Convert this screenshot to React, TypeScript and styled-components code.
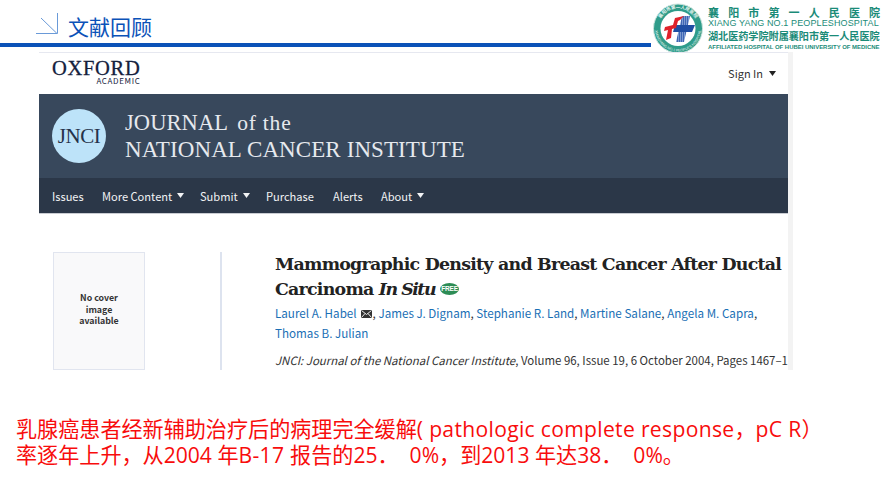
import React from "react";
import styled, { createGlobalStyle } from "styled-components";

const Global = createGlobalStyle`
  html, body { margin: 0; padding: 0; background: #fff; }
  #root { width: 888px; height: 500px; overflow: hidden; }
`;
const CJK = `"Noto Sans CJK SC", sans-serif`;
const YAHEI = `"Open Sans", "Noto Sans CJK SC", sans-serif`;

const Slide = styled.div`
  width: 888px; height: 500px; background: #fff; display: flex; flex-direction: column; overflow: hidden;
`;
const Header = styled.header`
  height: 52px; display: flex; align-items: flex-start; flex: none;
`;
const TitleBar = styled.div`
  width: 651px; height: 47px; box-sizing: border-box; border-bottom: 4px solid #0b52b8;
  display: flex; align-items: flex-start; padding: 13px 0 0 36px; gap: 10px;
`;
const SlideTitle = styled.h1`
  margin: 0; font: 400 21px/26px ${CJK}; color: #0b52b8;
`;
const Logo = styled.div`
  width: 237px; height: 52px; display: flex; align-items: flex-start;
`;
const LogoText = styled.div`
  margin-left: 5px; padding-top: 6px; display: flex; flex-direction: column; width: 172px; color: #1a8b78; font-family: ${CJK};
`;
const LogoLine1 = styled.div`
  font-size: 11px; line-height: 12px; font-weight: 700; display: flex; justify-content: space-between;
`;
const LogoLine2 = styled.div`
  font: 400 9px/11px "Liberation Sans", sans-serif; white-space: nowrap; letter-spacing: 0.12px;
`;
const LogoLine3 = styled.div`
  font-size: 10.1px; line-height: 13px; font-weight: 700; white-space: nowrap;
`;
const LogoLine4 = styled.div`
  font: 700 5.95px/10px "Liberation Sans", sans-serif; white-space: nowrap;
`;
const Page = styled.section`
  margin-left: 39px; width: 754px; height: 318px; display: flex; flex-direction: column; flex: none;
  background: linear-gradient(to right, #fff 749px, #f3f3f3 749px);
`;
const TopRow = styled.div`
  width: 749px; height: 42px; box-sizing: border-box; border-top: 1px solid #e6e8f0;
  display: flex; justify-content: space-between; align-items: flex-start; padding: 6px 12px 0 13px; flex: none;
`;
const Oxford = styled.div`
  display: flex; flex-direction: column; align-items: flex-end;
`;
const OxfordName = styled.div`
  font: 400 20.5px/18px "Liberation Serif", serif; color: #14213d; letter-spacing: 0.7px; -webkit-text-stroke: 0.3px #14213d;
`;
const OxfordSub = styled.div`
  font: 400 8px/8px ${CJK}; color: #14213d; letter-spacing: 0.65px;
`;
const SignIn = styled.div`
  margin-top: 6px; font: 400 11px/16px ${CJK}; color: #333; display: flex; align-items: center; gap: 6px;
`;
const Caret = styled.svg<{ $color?: string }>`
  width: 7px; height: 5px; fill: ${(p) => p.$color ?? "#222"}; flex: none;
`;
const Banner = styled.div`
  width: 749px; height: 84px; box-sizing: border-box; background: #38485c; display: flex; padding: 15px 0 0 13px; flex: none;
`;
const Badge = styled.div`
  width: 54px; height: 54px; border-radius: 50%; background: #bde3f9; color: #25324a; flex: none;
  display: flex; align-items: center; justify-content: center;
  font: 400 21px/1 "Liberation Serif", serif; letter-spacing: -0.4px;
`;
const BannerText = styled.div`
  margin-left: 19px; margin-top: 1px; color: #e6e9ee; font-family: "Liberation Serif", serif;
  font-size: 23px; line-height: 26.5px; font-weight: 400; white-space: nowrap; letter-spacing: 0.09px;
`;
const Journal = styled.span`
  font-size: 22.5px;
`;
const Small = styled.span`
  font-size: 21.5px; margin-left: 9px; letter-spacing: 0.8px;
`;
const Nav = styled.nav`
  width: 749px; height: 36px; box-sizing: border-box; background: #2b3748; border-bottom: 1px solid #c9ccd2;
  display: flex; align-items: center; padding: 0 0 0 13px; flex: none;
  font: 400 11.1px/16px ${CJK}; color: #f2f3f5;
`;
const NavItem = styled.div<{ $w: number }>`
  width: ${(p) => p.$w}px; display: flex; align-items: center; gap: 5px; white-space: nowrap; flex: none;
`;
const Article = styled.div`
  width: 749px; display: flex; padding: 38px 0 0 14px; box-sizing: border-box; height: 156px;
`;
const Cover = styled.div`
  width: 92px; height: 118px; box-sizing: border-box; border: 1px solid #e1e5ef; background: #f9f9fa; flex: none;
  display: flex; align-items: center; justify-content: center; text-align: center; padding-bottom: 3px;
  font: 700 8.8px/11.5px ${CJK}; color: #333;
`;
const Divider = styled.div`
  width: 2px; height: 118px; background: #dde3ef; margin-left: 75px; flex: none;
`;
const Meta = styled.div`
  margin-left: 53px; width: 518px; overflow: hidden; flex: none;
`;
const ArticleTitle = styled.h2`
  margin: 0; font: 700 17.4px/25px "DejaVu Serif", serif; color: #222; white-space: nowrap; letter-spacing: -0.76px;
`;
const TitleEm = styled.em`
  font-style: italic; letter-spacing: -1.5px;
`;
const Em = styled.em`
  font-style: italic;
`;
const Free = styled.span`
  display: inline-flex; vertical-align: 4px; margin-left: 5px; width: 19px; height: 12px; border-radius: 50%;
  background: #2d8c55; color: #fff; font: 700 6.5px/12px "Liberation Sans", sans-serif; align-items: center; justify-content: center;
  letter-spacing: -0.2px;
`;
const Authors = styled.div`
  margin-top: 1px; font: 400 11.65px/19.5px ${CJK}; color: #1a6fb5; width: 510px;
`;
const Comma = styled.span`
  color: #333;
`;
const Mail = styled.svg`
  width: 11px; height: 8px; margin-left: 4px; margin-right: 1px; vertical-align: 0;
`;
const Cite = styled.div`
  margin-top: 9px; font: 400 11.45px/18px ${CJK}; color: #333; white-space: nowrap;
`;
const Note = styled.p`
  margin: 46px 0 0 16px; width: 860px; font-family: ${YAHEI}; font-size: 21.1px; line-height: 26px; color: #f80c0c; white-space: pre;
`;
const Latin = styled.span`
  letter-spacing: 0.32px;
`;

const CaretIcon = ({ color }: { color?: string }) => (
  <Caret $color={color} viewBox="0 0 7 5"><path d="M0 0h7L3.5 5z" /></Caret>
);

const LogoMark = () => (
  <svg width="52" height="52" viewBox="0 0 52 52" style={{ flex: "none" }}>
    <defs>
      <pattern id="hatch" width="2" height="2" patternUnits="userSpaceOnUse">
        <rect width="2" height="2" fill="#7d9bd0" />
        <rect width="1" height="2" fill="#3f66b4" />
      </pattern>
      <path id="arcTop" d="M7 28.5a20 20 0 0 1 40 0" />
      <path id="arcBot" d="M4 28.5a23 23 0 0 0 46 0" />
    </defs>
    <circle cx="27" cy="28.5" r="24.5" fill="#2f9c8a" stroke="#cfe6e0" strokeWidth="1" />
    <circle cx="27" cy="28.5" r="17.5" fill="#fff" />
    <text fontSize="4.6" fill="#e6f5f1" fontFamily={CJK} fontWeight="700">
      <textPath href="#arcTop" startOffset="50%" textAnchor="middle">襄阳市第一人民医院</textPath>
    </text>
    <text fontSize="3.6" fill="#e6f5f1" fontFamily="Liberation Sans, sans-serif">
      <textPath href="#arcBot" startOffset="50%" textAnchor="middle">XIANGYANG NO.1 PEOPLE'S HOSPITAL</textPath>
    </text>
    <path d="M31 16h8l-6 26h-8z" fill="url(#hatch)" />
    <path d="M24 25h20l-3 7H22z" fill="#1f4ea3" />
    <path d="M14 27l8-2 2-7 9-2-4 4-2 1-2 7-4 1-1 9-5 2 2-10-4 1z" fill="#e0222a" />
  </svg>
);

export default function App() {
  return (
    <Slide>
      <Global />
      <Header>
        <TitleBar>
          <svg width="22" height="22" viewBox="0 0 22 22" style={{ flex: "none" }}>
            <path d="M0 20.5H21.5V0M5 5L21 20.5" fill="none" stroke="#6a9ad8" strokeWidth="1" />
          </svg>
          <SlideTitle>文献回顾</SlideTitle>
        </TitleBar>
        <Logo>
          <LogoMark />
          <LogoText>
            <LogoLine1>{"襄阳市第一人民医院".split("").map((c, i) => <span key={i}>{c}</span>)}</LogoLine1>
            <LogoLine2>XIANG YANG NO.1 PEOPLESHOSPITAL</LogoLine2>
            <LogoLine3>湖北医药学院附属襄阳市第一人民医院</LogoLine3>
            <LogoLine4>AFFILIATED HOSPITAL OF HUBEI UNIVERSITY OF MEDICNE</LogoLine4>
          </LogoText>
        </Logo>
      </Header>
      <Page>
        <TopRow>
          <Oxford>
            <OxfordName>OXFORD</OxfordName>
            <OxfordSub>ACADEMIC</OxfordSub>
          </Oxford>
          <SignIn>Sign In <CaretIcon /></SignIn>
        </TopRow>
        <Banner>
          <Badge>JNCI</Badge>
          <BannerText>
            <Journal>JOURNAL</Journal><Small>of the</Small><br />
            NATIONAL CANCER INSTITUTE
          </BannerText>
        </Banner>
        <Nav>
          <NavItem $w={50}>Issues</NavItem>
          <NavItem $w={98}>More Content <CaretIcon color="#f2f3f5" /></NavItem>
          <NavItem $w={66}>Submit <CaretIcon color="#f2f3f5" /></NavItem>
          <NavItem $w={67}>Purchase</NavItem>
          <NavItem $w={48}>Alerts</NavItem>
          <NavItem $w={60}>About <CaretIcon color="#f2f3f5" /></NavItem>
        </Nav>
        <Article>
          <Cover>No cover<br />image<br />available</Cover>
          <Divider />
          <Meta>
            <ArticleTitle>
              Mammographic Density and Breast Cancer After Ductal<br />
              Carcinoma <TitleEm>In Situ</TitleEm><Free>FREE</Free>
            </ArticleTitle>
            <Authors>
              Laurel A. Habel
              <Mail viewBox="0 0 11 8"><path d="M0 0h11v8H0z" fill="#333" /><path d="M0.5 0.5L5.5 4.5L10.5 0.5M0.5 7.5L4 3.5M10.5 7.5L7 3.5" fill="none" stroke="#fff" strokeWidth="0.9" /></Mail>
              <Comma>,</Comma> James J. Dignam<Comma>,</Comma> Stephanie R. Land<Comma>,</Comma> Martine Salane<Comma>,</Comma> Angela M. Capra<Comma>,</Comma><br />
              Thomas B. Julian
            </Authors>
            <Cite><Em>JNCI: Journal of the National Cancer Institute</Em>, Volume 96, Issue 19, 6 October 2004, Pages 1467–1</Cite>
          </Meta>
        </Article>
      </Page>
      <Note>
        乳腺癌患者经新辅助治疗后的病理完全缓解<Latin>( pathologic complete response</Latin>，<Latin>pC R</Latin>{"）\n"}
        率逐年上升，从2004 年<Latin>B-17 </Latin>报告的25．  0%，到2013 年达38．  0%。
      </Note>
    </Slide>
  );
}
